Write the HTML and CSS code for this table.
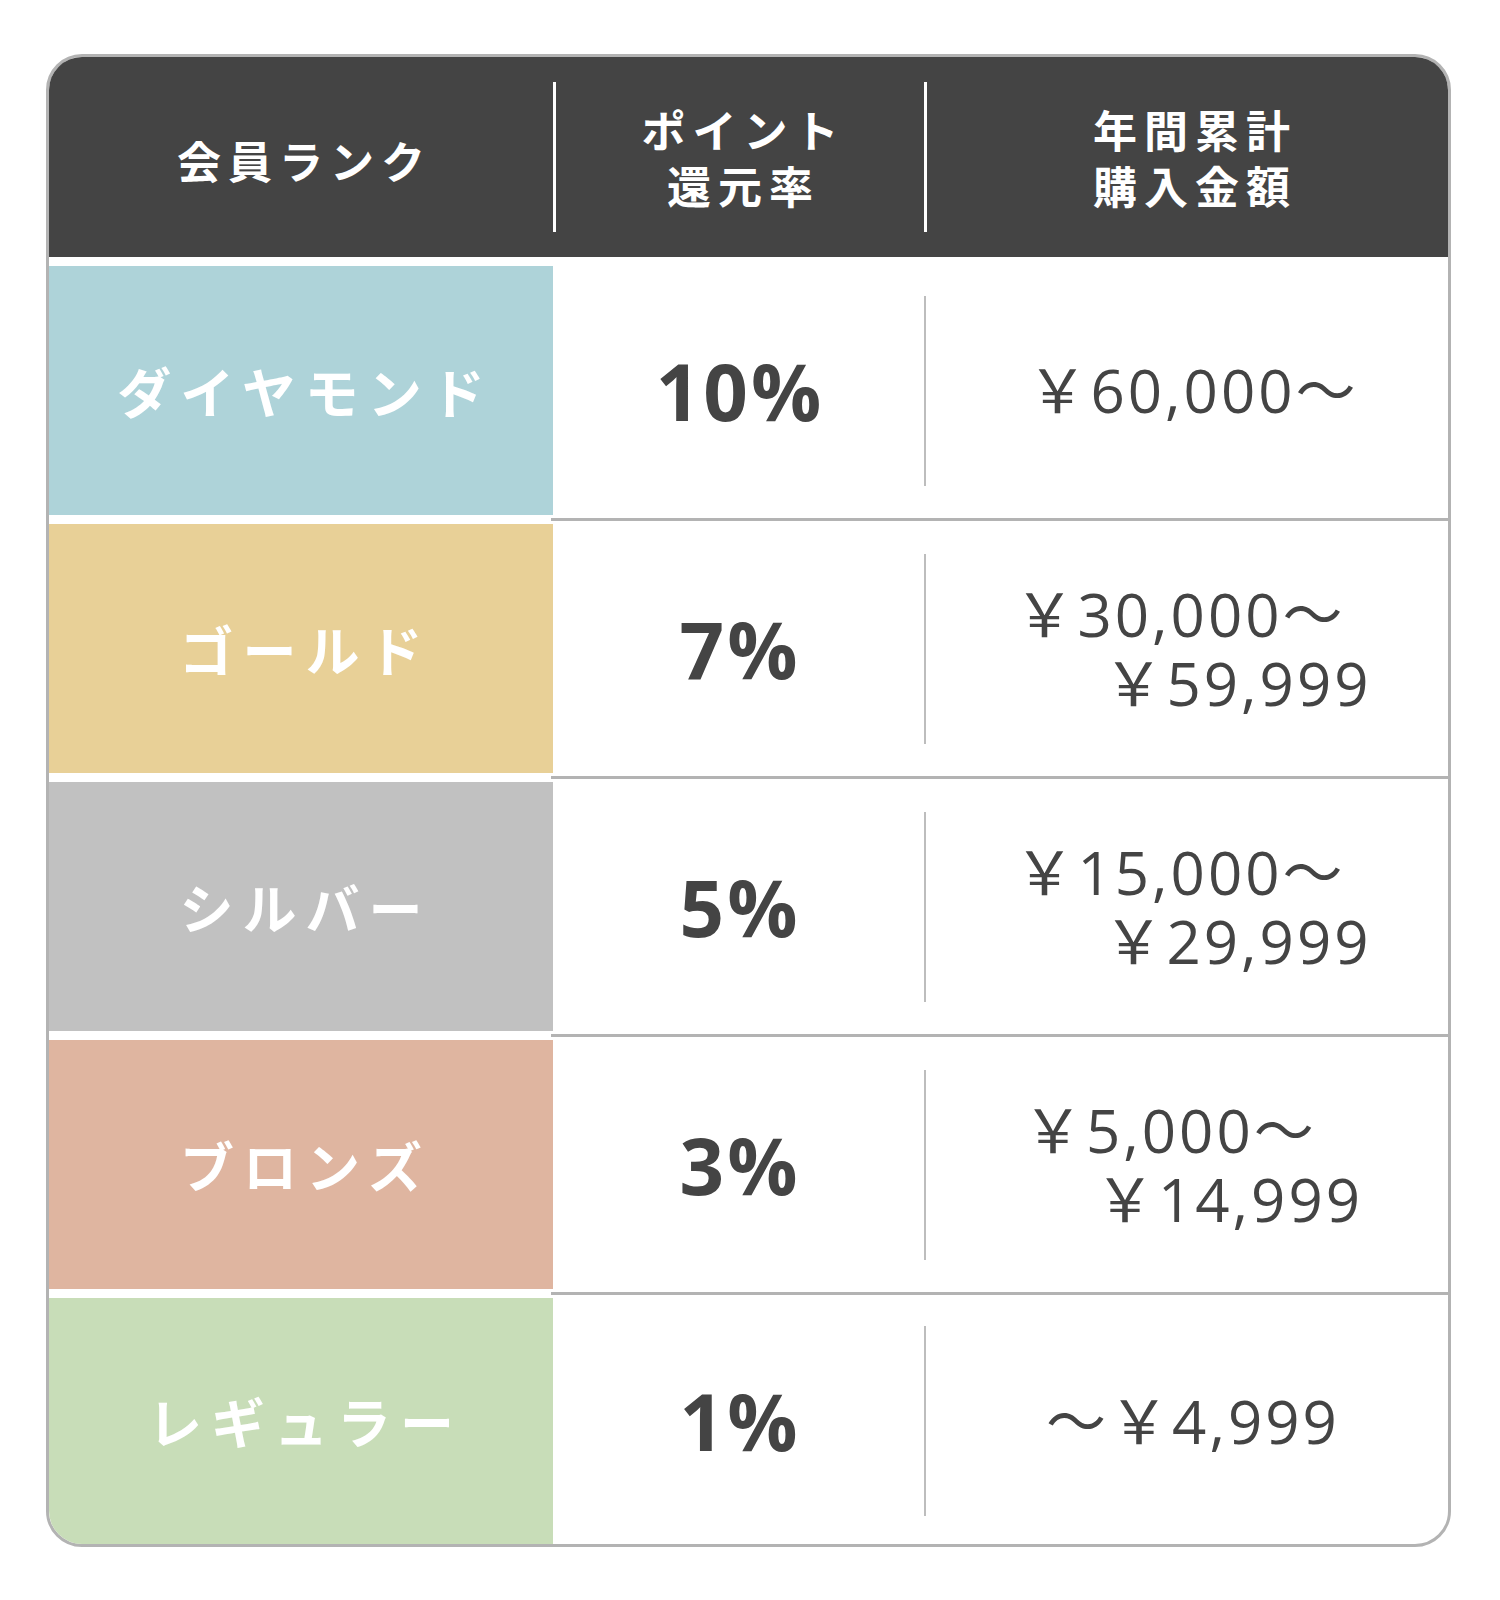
FILE: index.html
```html
<!DOCTYPE html>
<html lang="ja">
<head>
<meta charset="utf-8">
<title>会員ランク</title>
<link rel="stylesheet" href="styles.css">
</head>
<body>
<div class="table">
  <div class="head">
    <div class="hcell c1"><span class="ht">会員ランク</span></div>
    <div class="hdiv"></div>
    <div class="hcell c2"><span class="ht">ポイント<br>還元率</span></div>
    <div class="hdiv"></div>
    <div class="hcell c3"><span class="ht">年間累計<br>購入金額</span></div>
  </div>
  <div class="body">
    <div class="row">
      <div class="rank diamond"><span class="rt">ダイヤモンド</span></div>
      <div class="rate"><span class="pt">10%</span></div>
      <div class="vdiv"></div>
      <div class="amount"><div class="ln">￥60,000～</div></div>
    </div>
    <div class="sep"><span class="line"></span></div>
    <div class="row">
      <div class="rank gold"><span class="rt">ゴールド</span></div>
      <div class="rate"><span class="pt">7%</span></div>
      <div class="vdiv"></div>
      <div class="amount"><div class="ln">￥30,000～<br><span class="ind ind-a"></span>￥59,999</div></div>
    </div>
    <div class="sep"><span class="line"></span></div>
    <div class="row">
      <div class="rank silver"><span class="rt">シルバー</span></div>
      <div class="rate"><span class="pt">5%</span></div>
      <div class="vdiv"></div>
      <div class="amount"><div class="ln">￥15,000～<br><span class="ind ind-a"></span>￥29,999</div></div>
    </div>
    <div class="sep"><span class="line"></span></div>
    <div class="row">
      <div class="rank bronze"><span class="rt">ブロンズ</span></div>
      <div class="rate"><span class="pt">3%</span></div>
      <div class="vdiv"></div>
      <div class="amount"><div class="ln">￥5,000～<br><span class="ind ind-b"></span>￥14,999</div></div>
    </div>
    <div class="sep"><span class="line"></span></div>
    <div class="row last">
      <div class="rank regular"><span class="rt">レギュラー</span></div>
      <div class="rate"><span class="pt">1%</span></div>
      <div class="vdiv"></div>
      <div class="amount"><div class="ln">～￥4,999</div></div>
    </div>
  </div>
</div>
</body>
</html>
```

FILE: styles.css
```css
html, body {
  margin: 0;
  padding: 0;
  background: #ffffff;
}

body {
  font-family: "Noto Sans CJK JP", "Noto Sans", sans-serif;
  color: #444444;
}

.table {
  box-sizing: border-box;
  width: 1405px;
  margin: 54px 0 0 46px;
  border: 3px solid #b3b3b3;
  border-radius: 36px;
  overflow: hidden;
  background: #ffffff;
}

/* header */
.head {
  display: flex;
  height: 200px;
  background: #444444;
  color: #ffffff;
}

.hcell {
  display: flex;
  align-items: center;
  justify-content: center;
  text-align: center;
  box-sizing: border-box;
}

.c1 { width: 504px; padding-top: 6px; }
.c2 { width: 368px; }
.c3 { flex: 1; padding-left: 8px; }

.ht {
  font-family: "Noto Sans CJK JP", sans-serif;
  font-weight: 700;
  font-size: 44px;
  line-height: 56px;
  letter-spacing: 7px;
  padding-left: 7px;
}

.hdiv {
  align-self: center;
  width: 3px;
  height: 150px;
  background: #ffffff;
}

/* body */
.body {
  padding-top: 9px;
}

.row {
  display: flex;
  height: 249px;
}

.row.last {
  height: 246px;
}

.rank {
  width: 504px;
  display: flex;
  align-items: center;
  justify-content: center;
  color: #ffffff;
}

.rt {
  font-family: "Noto Sans CJK JP", sans-serif;
  font-weight: 700;
  font-size: 54px;
  letter-spacing: 9px;
  padding-left: 9px;
  line-height: 1;
}

.diamond { background: #aed3d9; }
.gold { background: #e8d097; }
.silver { background: #c1c1c1; }
.bronze { background: #dfb5a0; }
.regular { background: #c8ddb8; }

.rate {
  width: 371px;
  display: flex;
  align-items: center;
  justify-content: center;
}

.pt {
  font-family: "Open Sans", "Noto Sans", sans-serif;
  font-weight: 700;
  font-size: 78px;
  letter-spacing: 3px;
  padding-left: 3px;
  line-height: 1;
  color: #444444;
}

.vdiv {
  align-self: center;
  width: 2px;
  height: 190px;
  background: #bdbdbd;
}

.amount {
  flex: 1;
  display: flex;
  align-items: center;
  justify-content: center;
  padding-left: 12px;
}

.ln {
  font-family: "Open Sans", "Noto Sans CJK JP", sans-serif;
  font-weight: 400;
  font-size: 60px;
  line-height: 69px;
  letter-spacing: 3px;
  white-space: nowrap;
  text-align: left;
  color: #444444;
}

.ind {
  display: inline-block;
  height: 1px;
}

.ind-a { width: 89px; }
.ind-b { width: 72px; }

.sep {
  height: 9px;
  display: flex;
  align-items: center;
}

.sep .line {
  margin-left: 502px;
  flex: 1;
  height: 3px;
  background: #b3b3b3;
}
```
